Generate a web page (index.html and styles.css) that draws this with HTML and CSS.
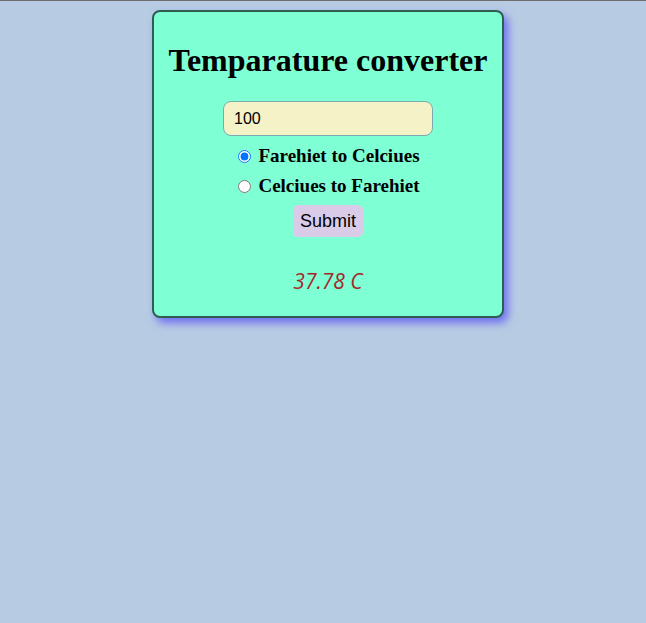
FILE: index.html
```html
<!DOCTYPE html>
<html>
<head>
<meta charset="utf-8">
<title>Temparature converter</title>
<link rel="stylesheet" href="styles.css">
</head>
<body>
<div class="card">
  <h1 class="title">Temparature converter</h1>
  <form class="form">
    <input class="value" type="text" value="100">
    <label class="option"><input type="radio" name="mode" checked> Farehiet to Celciues</label>
    <label class="option"><input type="radio" name="mode"> Celciues to Farehiet</label>
    <button class="submit" type="button">Submit</button>
  </form>
  <p class="result">37.78 C</p>
</div>
</body>
</html>
```
FILE: styles.css
```css
html {
  border-top: 1px solid #6e6e6e;
  background: #b7cce3;
  min-height: 100%;
  box-sizing: border-box;
}
body {
  margin: 0;
  min-height: 600px;
  padding: 9px 0 0 10px;
  font-family: "Liberation Serif", "Times New Roman", serif;
}
.card {
  width: 348px;
  margin: 0 auto;
  background: #7fffd4;
  border: 2px solid #2e5e50;
  border-radius: 8px;
  box-shadow: 4px 5px 9px #6f6ff0;
  text-align: center;
}
.title {
  font-size: 32px;
  font-weight: bold;
  margin: 0;
  padding-top: 30px;
  line-height: 37px;
}
.form {
  display: flex;
  flex-direction: column;
  align-items: center;
  margin-top: 22px;
}
.value {
  width: 210px;
  height: 35px;
  box-sizing: border-box;
  border: 1px solid #7ba9b0;
  border-radius: 8px;
  background: #f5f2c8;
  font-family: "Liberation Sans", Arial, sans-serif;
  font-size: 16px;
  padding: 0 10px;
  color: #000;
}
.option {
  font-weight: bold;
  font-size: 19px;
  line-height: 20px;
  margin-top: 10px;
  display: flex;
  align-items: center;
  gap: 4px;
}
.option input {
  margin: 0 3px 0 2px;
  width: 13px;
  height: 13px;
}
.submit {
  margin-top: 9px;
  width: 70px;
  height: 32px;
  border: none;
  border-radius: 5px;
  background: #dacbe9;
  font-family: "Liberation Sans", Arial, sans-serif;
  font-size: 18px;
  color: #000;
  padding: 0;
}
.result {
  margin: 32px 0 0 0;
  padding-bottom: 23px;
  font-family: "Open Sans", "DejaVu Sans", sans-serif;
  font-style: italic;
  font-size: 21px;
  line-height: 24px;
  color: #a3282c;
}
```
